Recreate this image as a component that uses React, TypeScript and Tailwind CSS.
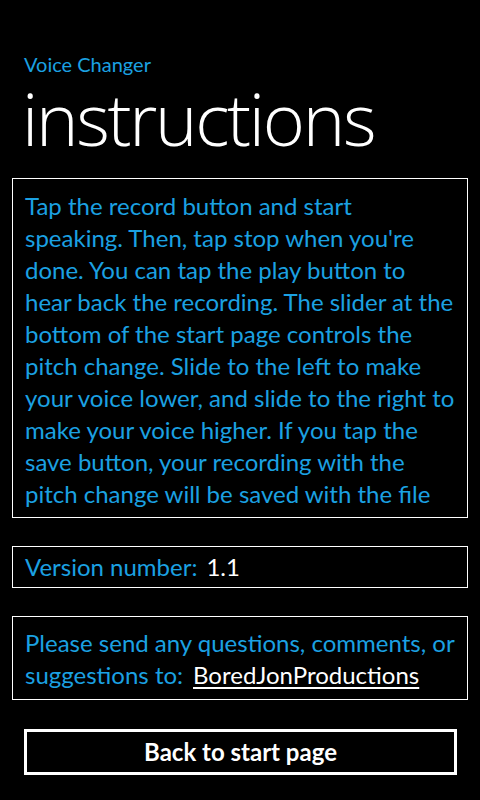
export default function App() {
  const instructions = [
    'Tap the record button and start',
    "speaking. Then, tap stop when you're",
    'done. You can tap the play button to',
    'hear back the recording. The slider at the',
    'bottom of the start page controls the',
    'pitch change. Slide to the left to make',
    'your voice lower, and slide to the right to',
    'make your voice higher. If you tap the',
    'save button, your recording with the',
    'pitch change will be saved with the file',
  ]

  return (
    <div className="w-[480px] h-[800px] bg-black text-white overflow-hidden font-['Lato',sans-serif]">
      {/* title */}
      <div className="pl-6 pt-[50px]">
        <div className="text-[20px] leading-[28px] text-[#1ba1e2]">Voice Changer</div>
        <h1 className="text-[72px] leading-[80px] font-light -ml-[2px] tracking-[-2.3px] font-['Open_Sans',sans-serif]">
          instructions
        </h1>
      </div>

      {/* instructions box */}
      <div className="mx-3 mt-[20px] h-[340px] border border-white overflow-hidden px-3 pt-[11px]">
        {instructions.map((line) => (
          <div key={line} className="text-[24px] leading-[32px] text-[#1ba1e2] whitespace-nowrap">
            {line}
          </div>
        ))}
      </div>

      {/* version */}
      <div className="mx-3 mt-[28px] h-[42px] border border-white px-3 flex items-center">
        <span className="text-[24px] leading-[32px] text-[#1ba1e2] whitespace-nowrap">Version number:</span>
        <span className="text-[24px] leading-[32px] text-white ml-[9px]">1.1</span>
      </div>

      {/* contact */}
      <div className="mx-3 mt-[28px] h-[84px] border border-white px-3 pt-[10px]">
        <div className="text-[24px] leading-[32px] text-[#1ba1e2] whitespace-nowrap">
          Please send any questions, comments, or
        </div>
        <div className="text-[24px] leading-[32px] text-[#1ba1e2] whitespace-nowrap">
          suggestions to:
          <a href="#" className="text-white underline underline-offset-[3px] ml-[10px]">
            BoredJonProductions
          </a>
        </div>
      </div>

      {/* back button */}
      <div className="px-6 mt-[29px]">
        <button className="w-[433px] h-[46px] border-[3px] border-white flex items-center justify-center text-[24px] font-bold text-white">
          Back to start page
        </button>
      </div>
    </div>
  )
}
